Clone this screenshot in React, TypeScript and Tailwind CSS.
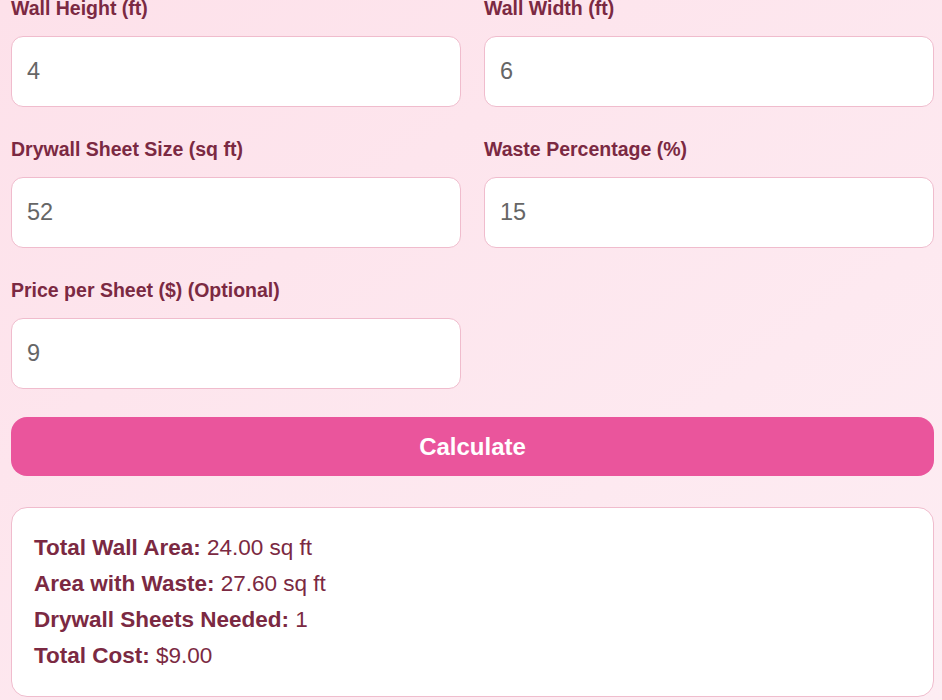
import { useState } from 'react'

const font = { fontFamily: '"Liberation Sans", Arial, sans-serif' }

interface FieldProps {
  label: string
  value: string
  onChange: (v: string) => void
}

function Field({ label, value, onChange }: FieldProps) {
  return (
    <div>
      <label className="block text-[19.5px] leading-[27px] font-bold text-[#7b2942] mb-[14px]">{label}</label>
      <input
        type="text"
        value={value}
        onChange={(e) => onChange(e.target.value)}
        className="w-full h-[71px] rounded-[12px] border border-[#f0bccd] bg-white px-[15px] text-[23.5px] text-[#666666] focus:outline-none"
        style={font}
      />
    </div>
  )
}

export default function App() {
  const [height, setHeight] = useState('4')
  const [width, setWidth] = useState('6')
  const [sheet, setSheet] = useState('52')
  const [waste, setWaste] = useState('15')
  const [price, setPrice] = useState('9')

  const area = (parseFloat(height) || 0) * (parseFloat(width) || 0)
  const withWaste = area * (1 + (parseFloat(waste) || 0) / 100)
  const sheets = Math.ceil(withWaste / (parseFloat(sheet) || 1))
  const cost = sheets * (parseFloat(price) || 0)

  return (
    <div
      className="min-h-[700px] bg-gradient-to-br from-[#fde1ea] to-[#fdedf3] pl-[11px] pr-[8px] overflow-hidden"
      style={font}
    >
      <div className="-mt-[5px] grid grid-cols-2 gap-x-[23px] gap-y-[29px]">
        <Field label="Wall Height (ft)" value={height} onChange={setHeight} />
        <Field label="Wall Width (ft)" value={width} onChange={setWidth} />
        <Field label="Drywall Sheet Size (sq ft)" value={sheet} onChange={setSheet} />
        <Field label="Waste Percentage (%)" value={waste} onChange={setWaste} />
        <Field label="Price per Sheet ($) (Optional)" value={price} onChange={setPrice} />
      </div>

      <button
        className="mt-[28px] w-full h-[59px] rounded-[16px] bg-[#ea559c] text-white text-[24px] font-bold"
        style={font}
      >
        Calculate
      </button>

      <div className="mt-[31px] rounded-[16px] border border-[#f0bccd] bg-white px-[22px] py-[22px] text-[22.5px] leading-[36px] text-[#7b2942]">
        <div>
          <span className="font-bold">Total Wall Area:</span> {area.toFixed(2)} sq ft
        </div>
        <div>
          <span className="font-bold">Area with Waste:</span> {withWaste.toFixed(2)} sq ft
        </div>
        <div>
          <span className="font-bold">Drywall Sheets Needed:</span> {sheets}
        </div>
        <div>
          <span className="font-bold">Total Cost:</span> ${cost.toFixed(2)}
        </div>
      </div>
    </div>
  )
}
